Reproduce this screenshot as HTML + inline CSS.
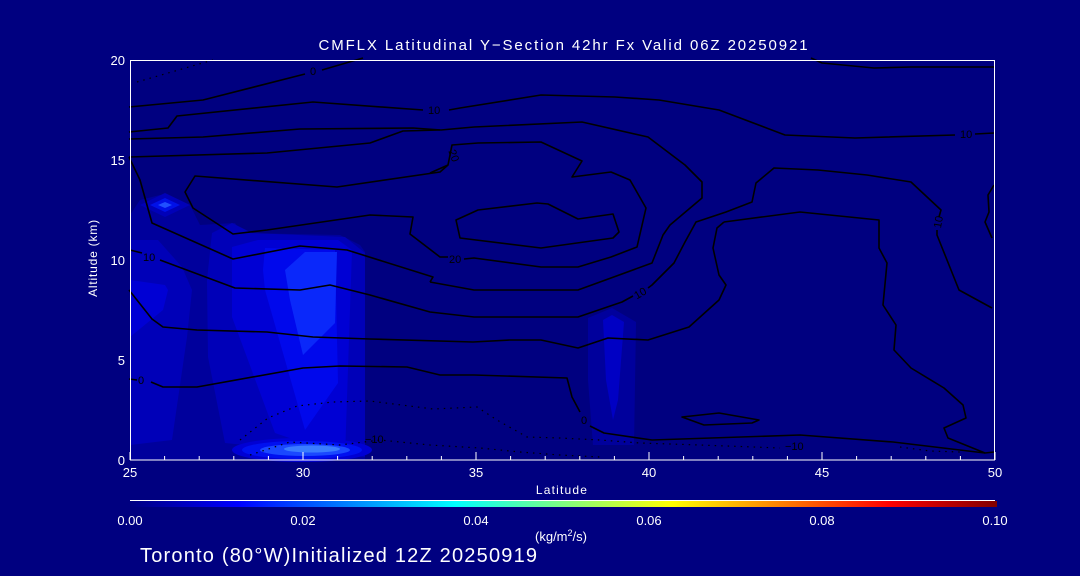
<!DOCTYPE html>
<html><head><meta charset="utf-8"><style>
html,body{margin:0;padding:0;background:#000080;width:1080px;height:576px;overflow:hidden}
svg{display:block}
text{font-family:"Liberation Sans",sans-serif;fill:#fff}
</style></head><body>
<svg width="1080" height="576" viewBox="0 0 1080 576" xmlns="http://www.w3.org/2000/svg">
<defs>
<linearGradient id="jet" x1="0" x2="1" y1="0" y2="0">
<stop offset="0" stop-color="#000080"/>
<stop offset="0.125" stop-color="#0000ff"/>
<stop offset="0.375" stop-color="#00ffff"/>
<stop offset="0.5" stop-color="#80ff80"/>
<stop offset="0.625" stop-color="#ffff00"/>
<stop offset="0.875" stop-color="#ff0000"/>
<stop offset="1" stop-color="#800000"/>
</linearGradient>
</defs>
<rect width="1080" height="576" fill="#000080"/>
<!-- shading -->
<polygon points="130,215 140,200 160,195 190,205 200,225 235,223 242,233 340,235 360,245 365,252 365,460 130,460" fill="#00009c"/>
<polygon points="130,240 158,240 182,267 192,290 187,337 172,440 130,445" fill="#0000b8"/>
<polygon points="207,280 212,233 232,223 252,233 345,237 365,253 365,457 225,443 208,357" fill="#0000b8"/>
<polygon points="130,280 165,285 168,290 163,310 130,337" fill="#0000d4"/>
<polygon points="232,247 258,240 338,240 352,250 345,457 275,433 232,317" fill="#0000d4"/>
<polygon points="263,270 265,248 335,250 338,383 305,430 265,290" fill="#0008ec"/>
<polygon points="285,270 305,252 337,252 335,323 303,355 290,300" fill="#0a28fa"/>
<polygon points="140,205 165,193 190,205 165,217" fill="#0000b8"/>
<polygon points="150,205 165,198 180,205 165,212" fill="#0010e8"/>
<polygon points="158,205 165,202 172,205 165,208" fill="#2050ff"/>
<ellipse cx="302" cy="450" rx="70" ry="12" fill="#0000d4"/>
<ellipse cx="302" cy="450" rx="60" ry="9" fill="#0010f0"/>
<ellipse cx="305" cy="450" rx="45" ry="6" fill="#1a48ff"/>
<ellipse cx="312" cy="449" rx="28" ry="3.5" fill="#3a7cff"/>
<polygon points="588,318 612,308 636,322 634,445 593,445 588,380" fill="#00009c"/>
<polygon points="603,320 612,315 624,322 618,400 613,420 606,380" fill="#0000c4"/>
<!-- contours -->
<g fill="none" stroke="#000" stroke-width="1.6" stroke-linejoin="round">
<polyline points="129,107 203,100 305,74"/>
<polyline points="322,70 363,58"/>
<polyline points="811,58 822,63 874,68 911,67 994,67"/>
<polyline points="129,132 168,128 177,116 313,102 423,110"/>
<polyline points="449,110 460,108 541,95 615,97 659,100 719,110 785,135 855,138 955,135"/>
<polyline points="975,134 994,133"/>
<polyline points="129,139 203,137 300,129 413,128 441,130 474,127 582,122 648,137 685,165 702,182 702,198 670,225 663,235 652,263 578,290 474,290 430,282"/>
<polyline points="129,157 267,153 370,143 403,131 440,130"/>
<polyline points="430,173 448,165 452,145 478,143 541,142 582,161 572,177 611,172 630,180 646,208 637,247 611,257 578,267 541,267 474,258 464,259"/>
<polyline points="448,257 440,257 410,234 413,217 370,215 267,230 233,234 193,208 185,192 195,176 337,187 440,172 448,165"/>
<polygon points="456,220 478,210 537,203 548,204 578,219 613,214 619,232 613,238 541,248 460,238"/>
<polyline points="129,157 140,180 152,223 233,259 300,246 347,250 433,277 430,282"/>
<polyline points="130,250 142,253"/>
<polyline points="160,260 235,288 300,290 330,285 370,295 430,312 474,317 578,317 622,302 633,296"/>
<polyline points="648,288 652,285 674,263 685,242 696,222 726,212 752,202 756,183 774,168 818,170 867,175 911,182 941,210 939,217"/>
<polyline points="937,230 937,235 959,290 992,308"/>
<polyline points="994,185 988,195 989,212 985,222 992,238"/>
<polyline points="724,222 800,212 879,220 879,248 887,263 883,305 896,325 894,350 911,368 944,388 963,405 966,418 944,428 948,438 985,453 994,452"/>
<polyline points="724,222 717,228 713,248 719,275 726,285 719,300 689,327 648,340 608,338 578,348 541,340 510,340 473,342 370,339 313,337 267,332 197,330 163,327 152,319 129,290"/>
<polyline points="129,379 137,380"/>
<polyline points="151,382 163,387 197,387 303,368 340,366 407,367 440,375 474,375 567,378 572,397 580,412"/>
<polyline points="590,426 604,433 652,440 800,435 893,442 985,453"/>
<polygon points="682,417 719,413 759,420 752,423 704,425"/>
</g>
<g fill="none" stroke="#000" stroke-width="1.2" stroke-dasharray="1.5,5">
<polyline points="137,82 213,60"/>
<polyline points="240,440 268,418 297,406 333,402 370,401 433,409 477,407 497,420 527,437 560,438 600,440 640,443 700,445 780,448"/>
<polyline points="250,455 290,442 340,445 380,440 430,445 480,448 520,452 560,455 600,457"/>
<polyline points="900,447 930,451 960,452"/>
</g>
<g font-size="11">
<text x="310" y="75" style="fill:#000">0</text>
<text x="428" y="114" style="fill:#000">10</text>
<text x="960" y="138" style="fill:#000">10</text>
<text x="143" y="261" style="fill:#000">10</text>
<text x="449" y="263" style="fill:#000">20</text>
<text x="138" y="384" style="fill:#000">0</text>
<text x="581" y="424" style="fill:#000">0</text>
<text x="365" y="443" style="fill:#000">−10</text>
<text x="785" y="450" style="fill:#000">−10</text>
<text x="634" y="297" style="fill:#000" transform="rotate(-30 640 293)">10</text>
<text x="449" y="160" style="fill:#000" transform="rotate(70 455 155)">20</text>
<text x="932" y="226" style="fill:#000" transform="rotate(-80 938 222)">10</text>
</g>
<!-- axes -->
<rect x="130.5" y="60.5" width="864" height="399.5" fill="none" stroke="#fff" stroke-width="1"/>
<g stroke="#fff" stroke-width="1">
<line x1="130" y1="460" x2="995" y2="460"/>
<path d="M130 460v-8M303 460v-8M476 460v-8M649 460v-8M822 460v-8M995 460v-8"/>
<path d="M164.6 460v-4M199.2 460v-4M233.8 460v-4M268.4 460v-4M337.6 460v-4M372.2 460v-4M406.8 460v-4M441.4 460v-4M510.6 460v-4M545.2 460v-4M579.8 460v-4M614.4 460v-4M683.6 460v-4M718.2 460v-4M752.8 460v-4M787.4 460v-4M856.6 460v-4M891.2 460v-4M925.8 460v-4M960.4 460v-4"/>
</g>
<g font-size="13">
<text x="130" y="477" text-anchor="middle">25</text>
<text x="303" y="477" text-anchor="middle">30</text>
<text x="476" y="477" text-anchor="middle">35</text>
<text x="649" y="477" text-anchor="middle">40</text>
<text x="822" y="477" text-anchor="middle">45</text>
<text x="995" y="477" text-anchor="middle">50</text>
<text x="125" y="65" text-anchor="end">20</text>
<text x="125" y="165" text-anchor="end">15</text>
<text x="125" y="265" text-anchor="end">10</text>
<text x="125" y="365" text-anchor="end">5</text>
<text x="125" y="465" text-anchor="end">0</text>
<text x="562" y="494" text-anchor="middle" font-size="12" letter-spacing="1.2">Latitude</text>
<text x="0" y="0" text-anchor="middle" font-size="12" letter-spacing="0.8" transform="translate(97 258) rotate(-90)">Altitude (km)</text>
<text x="564" y="50" text-anchor="middle" font-size="15" letter-spacing="1.9">CMFLX Latitudinal Y−Section 42hr  Fx Valid 06Z 20250921</text>
</g>
<line x1="130" y1="500.5" x2="995" y2="500.5" stroke="#fff"/>
<rect x="130" y="501" width="867" height="6" fill="url(#jet)"/>
<g font-size="13">
<text x="130" y="525" text-anchor="middle">0.00</text>
<text x="303" y="525" text-anchor="middle">0.02</text>
<text x="476" y="525" text-anchor="middle">0.04</text>
<text x="649" y="525" text-anchor="middle">0.06</text>
<text x="822" y="525" text-anchor="middle">0.08</text>
<text x="995" y="525" text-anchor="middle">0.10</text>
<text x="561" y="541" text-anchor="middle">(kg/m<tspan font-size="9" dy="-5">2</tspan><tspan dy="5">/s)</tspan></text>
</g>
<text x="140" y="562" font-size="20" letter-spacing="1.2">Toronto (80°W)Initialized 12Z 20250919</text>
</svg>
</body></html>
